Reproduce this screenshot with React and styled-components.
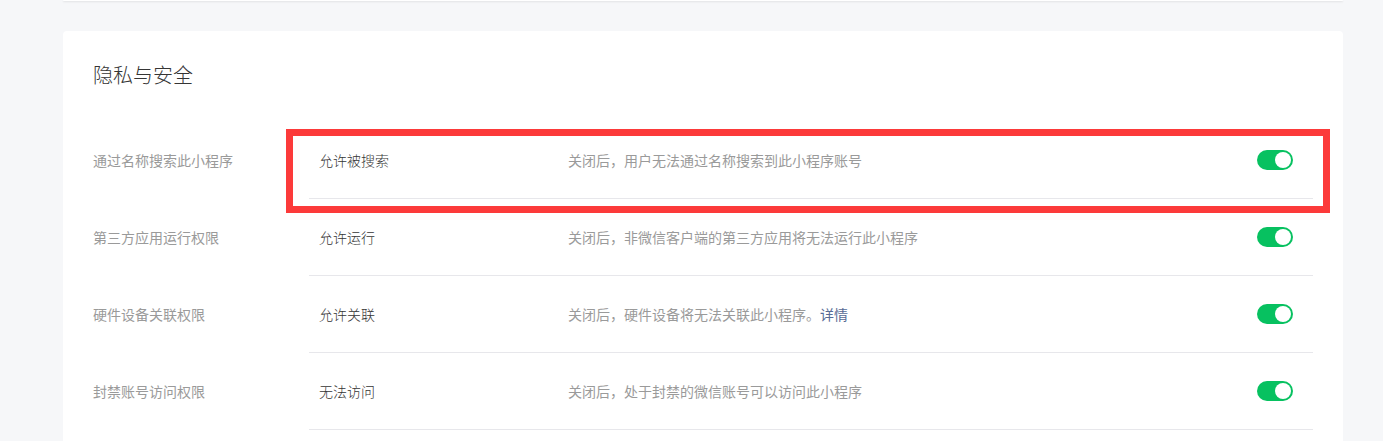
import styled, { createGlobalStyle } from 'styled-components';

const GlobalStyle = createGlobalStyle`
  html, body {
    margin: 0;
    padding: 0;
    background: #f6f7f9;
    font-family: "Noto Sans CJK SC", "Noto Sans", sans-serif;
  }
`;

const Page = styled.div`
  padding: 0 40px 0 63px;
  height: 441px;
  overflow: hidden;
`;

const TopCard = styled.div`
  height: 1px;
  background: #fff;
  border-radius: 0 0 4px 4px;
  box-shadow: 0 1px 2px rgba(0, 0, 0, 0.12);
`;

const Card = styled.section`
  position: relative;
  margin-top: 30px;
  background: #fff;
  border-radius: 4px;
  padding: 30px 30px 0;
  height: 440px;
`;

const Title = styled.h2`
  margin: 0 0 33px;
  font-size: 20px;
  line-height: 28px;
  font-weight: 300;
  color: #353535;
`;

const Row = styled.div`
  display: flex;
  align-items: stretch;
  height: 77px;
  font-size: 14px;
`;

const Label = styled.div`
  width: 216px;
  flex-shrink: 0;
  display: flex;
  align-items: center;
  color: #9a9a9a;
  padding-bottom: 2px;
`;

const Content = styled.div`
  flex: 1;
  display: flex;
  align-items: center;
  padding: 0 20px 1px 10px;
  border-bottom: 1px solid #e7e7eb;
`;

const Value = styled.div`
  width: 249px;
  flex-shrink: 0;
  color: #353535;
  font-weight: 300;
`;

const Desc = styled.div`
  flex: 1;
  color: #9a9a9a;
`;

const Link = styled.a`
  color: #576b95;
  text-decoration: none;
`;

const Switch = styled.span`
  position: relative;
  width: 36px;
  height: 20px;
  border-radius: 10px;
  background: #07c160;
  flex-shrink: 0;

  &::after {
    content: '';
    position: absolute;
    top: 2px;
    right: 2px;
    width: 16px;
    height: 16px;
    border-radius: 50%;
    background: #fff;
  }
`;

const Highlight = styled.div`
  position: absolute;
  left: 223px;
  top: 98px;
  width: 1044px;
  height: 84px;
  box-sizing: border-box;
  border: 7px solid #fc3a3a;
  pointer-events: none;
`;

const rows = [
  {
    label: '通过名称搜索此小程序',
    value: '允许被搜索',
    desc: '关闭后，用户无法通过名称搜索到此小程序账号',
  },
  {
    label: '第三方应用运行权限',
    value: '允许运行',
    desc: '关闭后，非微信客户端的第三方应用将无法运行此小程序',
  },
  {
    label: '硬件设备关联权限',
    value: '允许关联',
    desc: '关闭后，硬件设备将无法关联此小程序。',
    link: '详情',
  },
  {
    label: '封禁账号访问权限',
    value: '无法访问',
    desc: '关闭后，处于封禁的微信账号可以访问此小程序',
  },
];

const App = () => (
  <>
    <GlobalStyle />
    <Page>
      <TopCard />
      <Card>
        <Title>隐私与安全</Title>
        {rows.map((r) => (
          <Row key={r.label}>
            <Label>{r.label}</Label>
            <Content>
              <Value>{r.value}</Value>
              <Desc>
                {r.desc}
                {r.link && <Link href="#">{r.link}</Link>}
              </Desc>
              <Switch />
            </Content>
          </Row>
        ))}
        <Highlight />
      </Card>
    </Page>
  </>
);

export default App;
